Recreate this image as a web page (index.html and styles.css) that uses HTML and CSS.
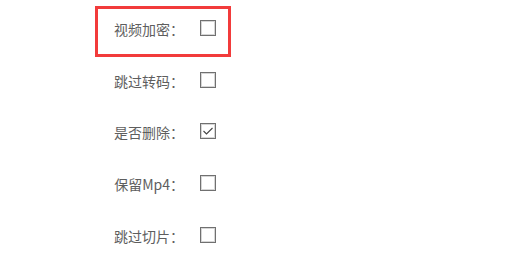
FILE: index.html
```html
<!DOCTYPE html>
<html lang="zh-CN">
<head>
<meta charset="utf-8">
<link rel="stylesheet" href="styles.css">
</head>
<body>
<div class="form">
  <div class="row highlight">
    <span class="label">视频加密：</span>
    <span class="check"></span>
  </div>
  <div class="row">
    <span class="label">跳过转码：</span>
    <span class="check"></span>
  </div>
  <div class="row">
    <span class="label">是否删除：</span>
    <span class="check checked"><svg viewBox="0 0 16 16" width="16" height="16"><polyline points="3.5,8 6.5,11 12.5,5" fill="none" stroke="#444" stroke-width="1.1"/></svg></span>
  </div>
  <div class="row">
    <span class="label">保留Mp4：</span>
    <span class="check"></span>
  </div>
  <div class="row">
    <span class="label">跳过切片：</span>
    <span class="check"></span>
  </div>
</div>
</body>
</html>
```
FILE: styles.css
```css
html, body {
  margin: 0;
  padding: 0;
  background: #fff;
}
body {
  width: 506px;
  height: 276px;
  overflow: hidden;
  font-family: "Microsoft YaHei", "Noto Sans CJK SC", "Noto Sans", sans-serif;
}
.form {
  padding-top: 2px;
  display: flex;
  flex-direction: column;
}
.row {
  position: relative;
  height: 51.75px;
  display: flex;
  align-items: center;
}
.label {
  width: 90px;
  margin-left: 94px;
  text-align: right;
  font-size: 14px;
  color: #5e5e5e;
  padding-top: 2px;
  line-height: 20px;
}
.check {
  margin-left: 16px;
  width: 16px;
  height: 16px;
  box-sizing: border-box;
  border: 1px solid #707070;
  box-shadow: inset 0 0 0 1px #d6d6d6;
  background: #fff;
  position: relative;
}
.check svg {
  position: absolute;
  left: -1px;
  top: -1px;
}
.highlight::after {
  content: "";
  position: absolute;
  left: 95px;
  top: 4px;
  width: 136px;
  height: 51px;
  box-sizing: border-box;
  border: 3px solid #f23b3b;
}
```
